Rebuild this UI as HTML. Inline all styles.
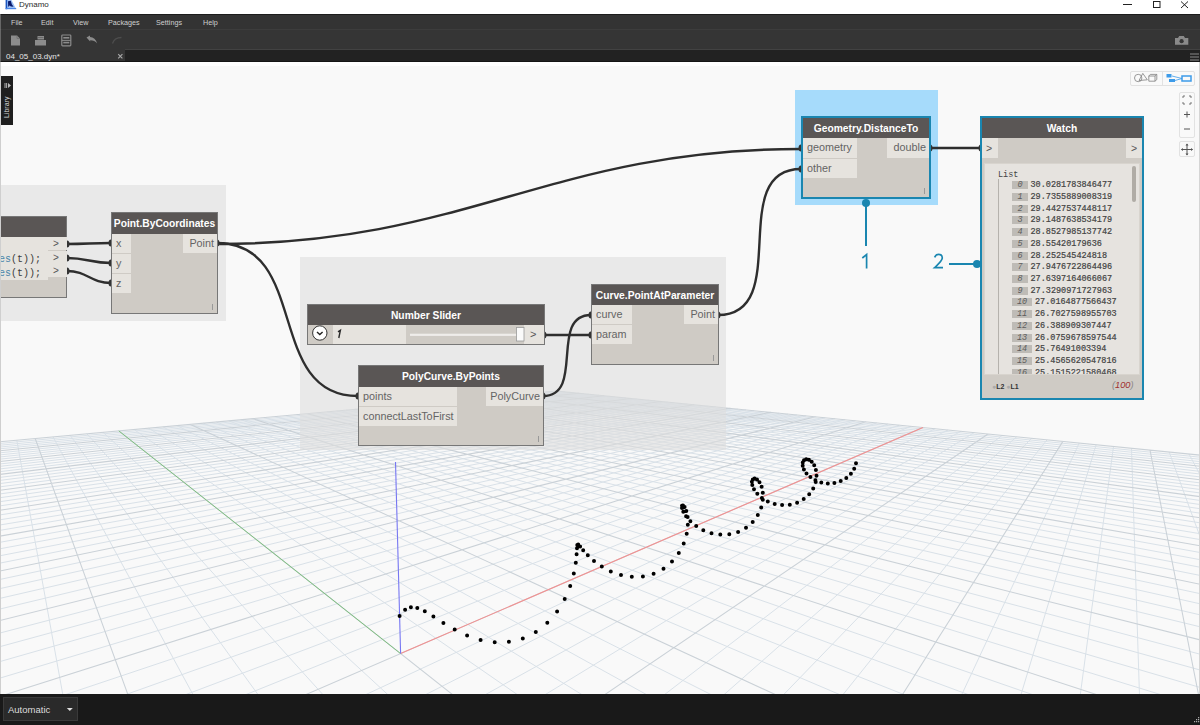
<!DOCTYPE html><html><head><meta charset="utf-8"><style>
*{margin:0;padding:0;box-sizing:border-box}
html,body{width:1200px;height:725px;overflow:hidden;background:#fff;font-family:"Liberation Sans",sans-serif}
.abs{position:absolute}
#title{position:absolute;left:0;top:0;width:1200px;height:14px;background:#fff}
#menu{position:absolute;left:0;top:14px;width:1200px;height:16px;background:#333;border-top:1px solid #1c1c1c;border-bottom:1px solid #3c3c3c}
#menu span{position:absolute;top:2.7px;font-size:7.2px;color:#cfcfcf}
#tool{position:absolute;left:0;top:30px;width:1200px;height:20px;background:#353535;border-bottom:1px solid #424242}
#tabs{position:absolute;left:0;top:50px;width:1200px;height:12px;background:#222;border-bottom:1px solid #151515}
#tab{position:absolute;left:0;top:-1px;width:125px;height:12px;background:#353535}
#canvas{position:absolute;left:0;top:62px;width:1200px;height:632px;background:#f9f9f9;overflow:hidden}
#bottom{position:absolute;left:0;top:694px;width:1200px;height:31px;background:#191919}
.group{position:absolute;background:rgba(222,222,222,0.6)}
.node{position:absolute;background:#cfcbc5}
.hdr{position:absolute;left:0;top:0;right:0;background:#5a5655;color:#fff;font-weight:bold;font-size:10.25px;text-align:center;white-space:nowrap}
.pin{position:absolute;left:0;background:#e6e3de;color:#646464;font-size:10.8px;padding-left:4px;white-space:nowrap}
.pout{position:absolute;right:0;background:#e6e3de;color:#646464;font-size:10.8px;padding-right:3px;text-align:right;white-space:nowrap}
.lace{position:absolute;right:4px;bottom:3px;width:1px;height:6px;background:#999}
svg{position:absolute;left:0;top:0}
</style></head><body>
<div id="title">
<svg width="20" height="14" style="left:0;top:0"><path d="M6 0H11.5L16 8.8H6Z" fill="#9cc0f5"/><path d="M8 1.2L10.8 0.8L11.8 4.2L13.6 6.8L11 6.6L9.2 5.6L8.2 7.2Z" fill="#0a1a6e"/><rect x="5.6" y="0" width="1.6" height="9.2" fill="#1b55c0"/><rect x="5.6" y="8" width="10.6" height="1.2" fill="#4a86e8"/></svg>
<div class="abs" style="left:19px;top:-0.5px;font-size:8px;color:#2b2b2b">Dynamo</div>
<svg width="80" height="14" style="left:1115px;top:0"><path d="M8 4.5H17" stroke="#222" stroke-width="1"/><rect x="38.5" y="1.5" width="6.5" height="6" fill="none" stroke="#222"/><path d="M66 1.5L73 8M73 1.5L66 8" stroke="#222" stroke-width="1"/></svg>
</div>
<div id="menu"><span style="left:11px">File</span><span style="left:41px">Edit</span><span style="left:73px">View</span><span style="left:108px">Packages</span><span style="left:156px">Settings</span><span style="left:203px">Help</span></div>
<div id="tool"><svg width="1200" height="19">
<path d="M11 5.5H17L20 8.5V15.5H11Z" fill="#8c8c8c"/><path d="M17 5.5V8.5H20" fill="none" stroke="#666" stroke-width="0.6"/>
<path d="M35 10H46V15.5H35Z" fill="#8c8c8c"/><path d="M37.5 6H44V9.5H37.5Z" fill="#8c8c8c"/><path d="M38 7.5H43.5" stroke="#555" stroke-width="0.6"/>
<rect x="61.8" y="5" width="9" height="10.8" rx="0.8" fill="none" stroke="#8c8c8c" stroke-width="1.2"/><rect x="63.3" y="7" width="6" height="1.6" fill="#8c8c8c"/><rect x="63.3" y="11.8" width="6" height="1.6" fill="#8c8c8c"/><path d="M61.8 10.4H70.8" stroke="#8c8c8c" stroke-width="1"/>
<path d="M86.5 7.5L90 5.5V7C93.5 7.3 96 9.5 97.2 13.5C95.5 11.5 93.2 10.3 90.2 10.3V11.5Z" fill="#8c8c8c"/>
<path d="M112.5 13.5C113.5 10 116.5 7.5 121.5 7.5" fill="none" stroke="#4d4d4d" stroke-width="1.4"/>
<path d="M1175 8H1178L1179.2 6H1183.8L1185 8H1188.3V14.8H1175Z" fill="#8a8a8a"/><circle cx="1181.6" cy="11.2" r="2.1" fill="#353535"/>
</svg></div>
<div id="tabs"><div id="tab"><div class="abs" style="left:6px;top:3px;font-size:8px;color:#e6e6e6">04_05_03.dyn*</div>
<svg width="12" height="12" style="left:115.5px;top:2px"><path d="M2.2 3.2L6.4 7.4M6.4 3.2L2.2 7.4" stroke="#aaa" stroke-width="1.1"/></svg></div>
<svg width="12" height="12" style="left:1189px;top:1px"><path d="M1 3H10M1 6H10M1 9H10" stroke="#888" stroke-width="1"/></svg></div>
<div id="canvas"><div style="position:absolute;left:0;top:0;width:1200px;height:4px;background:#fff"></div><div style="position:absolute;left:1198.8px;top:0;width:1.2px;height:632px;background:#d5d5d5;z-index:5"></div><div style="position:absolute;left:0;top:0;width:1.2px;height:632px;background:#cfcfcf;z-index:5"></div>
<svg width="1200" height="632" viewBox="0 62 1200 632">
<path d="M1205.0 484.1L1189.0 454.0M1205.0 550.3L1169.2 452.0M1139.6 699.0L1131.5 448.3M1079.7 699.0L1113.5 446.5M1019.7 699.0L1096.1 444.8M959.7 699.0L1079.2 443.1M839.5 699.0L1047.0 439.9M779.4 699.0L1031.6 438.3M-2.4 699.0L-2.2 441.9M719.1 699.0L1016.6 436.8M63.6 699.0L16.8 440.2M658.8 699.0L1002.1 435.4M195.4 699.0L53.0 436.9M538.0 699.0L974.2 432.6M261.2 699.0L70.2 435.3M477.5 699.0L960.9 431.3M326.9 699.0L86.9 433.8M417.0 699.0L947.9 430.0M392.6 699.0L103.1 432.3M356.4 699.0L935.2 428.7M523.7 699.0L134.0 429.5M235.0 699.0L910.9 426.3M589.1 699.0L148.7 428.2M174.2 699.0L899.2 425.1M654.5 699.0L163.1 426.9M113.3 699.0L887.8 424.0M719.8 699.0L177.0 425.6M52.4 699.0L876.7 422.9M850.1 699.0L203.6 423.2M-5.0 679.6L855.3 420.8M915.2 699.0L216.4 422.0M-5.0 663.0L845.0 419.7M980.2 699.0L228.8 420.9M-5.0 648.0L834.9 418.7M1045.2 699.0L240.9 419.7M-5.0 634.3L825.1 417.8M1174.9 699.0L264.1 417.6M-5.0 610.2L806.1 415.9M1205.0 688.9L275.3 416.6M-5.0 599.5L796.9 415.0M1205.0 671.4L286.2 415.6M-5.0 589.7L788.0 414.1M1205.0 655.5L296.8 414.6M-5.0 580.5L779.2 413.2M1205.0 628.0L317.2 412.8M-5.0 564.1L762.2 411.5M1205.0 616.0L327.0 411.9M-5.0 556.7L754.0 410.7M1205.0 604.9L336.6 411.0M-5.0 549.7L746.0 409.9M1205.0 594.7L346.0 410.1M-5.0 543.2L738.1 409.1M1205.0 576.4L364.1 408.5M-5.0 531.2L722.9 407.6M1205.0 568.2L372.9 407.7M-5.0 525.8L715.5 406.8M1205.0 560.6L381.4 406.9M-5.0 520.6L708.2 406.1M1205.0 553.4L389.8 406.2M-5.0 515.7L701.1 405.4M1205.0 540.4L405.9 404.7M-5.0 506.6L687.3 404.0M1205.0 534.5L413.7 404.0M-5.0 502.4L680.7 403.4M1205.0 528.9L421.4 403.3M-5.0 498.4L674.1 402.7M1205.0 523.6L428.9 402.6M-5.0 494.6L667.7 402.1M1205.0 513.9L443.4 401.3M-5.0 487.5L655.2 400.8M1205.0 509.4L450.4 400.6M-5.0 484.2L649.1 400.2M1205.0 505.2L457.3 400.0M-5.0 481.0L643.1 399.6M1205.0 501.1L464.1 399.4M-5.0 478.0L637.2 399.0M1205.0 493.6L477.1 398.2M-5.0 472.2L625.8 397.9M1205.0 490.1L483.5 397.6M-5.0 469.5L620.3 397.4M1205.0 486.7L489.7 397.0M-5.0 466.9L614.8 396.8M1205.0 483.5L495.9 396.5M-5.0 464.5L609.5 396.3M1205.0 477.5L507.7 395.4M-5.0 459.7L599.0 395.2M1205.0 474.6L513.5 394.9M-5.0 457.5L593.9 394.7M1205.0 471.9L519.2 394.3M-5.0 455.4L588.9 394.2M1205.0 469.3L524.7 393.8M-5.0 453.3L584.0 393.7M1205.0 464.4L535.6 392.8M-5.0 449.3L574.4 392.8M1205.0 462.1L540.9 392.4M-5.0 447.5L569.7 392.3M1205.0 459.8L546.0 391.9M-5.0 445.7L565.1 391.9M1205.0 457.7L551.1 391.4M-5.0 443.9L560.6 391.4" stroke="#d9e1e8" stroke-width="1" fill="none"/>
<path d="M1199.4 699.0L1150.0 450.1M899.7 699.0L1062.9 441.4M129.5 699.0L35.2 438.5M598.4 699.0L988.0 434.0M458.1 699.0L118.8 430.9M295.7 699.0L922.9 427.5M785.0 699.0L190.5 424.4M-5.0 697.9L865.9 421.8M1110.1 699.0L252.7 418.7M-5.0 621.7L815.5 416.8M1205.0 641.1L307.1 413.7M-5.0 572.0L770.6 412.3M1205.0 585.2L355.2 409.3M-5.0 537.0L730.4 408.3M1205.0 546.7L397.9 405.4M-5.0 511.0L694.2 404.7M1205.0 518.6L436.2 401.9M-5.0 491.0L661.4 401.5M1205.0 497.3L470.7 398.8M-5.0 475.0L631.5 398.5M1205.0 480.4L501.9 395.9M-5.0 462.1L604.2 395.8M1205.0 466.8L530.2 393.3M-5.0 451.3L579.2 393.3M1205.0 455.6L556.1 391.0M-5.0 442.2L556.1 391.0" stroke="#cad1d7" stroke-width="1.05" fill="none"/>
<path d="M400.6 653.6L922.9 427.5" stroke="#f29090" stroke-width="1.1"/>
<path d="M400.6 653.6L118.8 430.9" stroke="#80c080" stroke-width="1"/>
<path d="M400.6 653.6L395.5 462.0" stroke="#7777f2" stroke-width="1.1"/>
<path d="M399.6 616.1m-2 0a2 2 0 1 0 4 0a2 2 0 1 0 -4 0M405.1 609.8m-2 0a2 2 0 1 0 4 0a2 2 0 1 0 -4 0M410.9 607.2m-2 0a2 2 0 1 0 4 0a2 2 0 1 0 -4 0M417.3 607.9m-2 0a2 2 0 1 0 4 0a2 2 0 1 0 -4 0M424.8 611.3m-2 0a2 2 0 1 0 4 0a2 2 0 1 0 -4 0M433.4 616.6m-2 0a2 2 0 1 0 4 0a2 2 0 1 0 -4 0M443.4 623.0m-2 0a2 2 0 1 0 4 0a2 2 0 1 0 -4 0M454.7 629.5m-2 0a2 2 0 1 0 4 0a2 2 0 1 0 -4 0M467.1 635.4m-2 0a2 2 0 1 0 4 0a2 2 0 1 0 -4 0M480.6 639.9m-2 0a2 2 0 1 0 4 0a2 2 0 1 0 -4 0M494.7 642.2m-2 0a2 2 0 1 0 4 0a2 2 0 1 0 -4 0M508.9 641.8m-2 0a2 2 0 1 0 4 0a2 2 0 1 0 -4 0M522.8 638.4m-2 0a2 2 0 1 0 4 0a2 2 0 1 0 -4 0M535.8 632.0m-2 0a2 2 0 1 0 4 0a2 2 0 1 0 -4 0M547.3 622.8m-2 0a2 2 0 1 0 4 0a2 2 0 1 0 -4 0M557.1 611.5m-2 0a2 2 0 1 0 4 0a2 2 0 1 0 -4 0M564.7 598.9m-2 0a2 2 0 1 0 4 0a2 2 0 1 0 -4 0M570.2 585.9m-2 0a2 2 0 1 0 4 0a2 2 0 1 0 -4 0M573.8 573.6m-2 0a2 2 0 1 0 4 0a2 2 0 1 0 -4 0M575.8 562.8m-2 0a2 2 0 1 0 4 0a2 2 0 1 0 -4 0M576.6 554.2m-2 0a2 2 0 1 0 4 0a2 2 0 1 0 -4 0M577.0 548.3m-2 0a2 2 0 1 0 4 0a2 2 0 1 0 -4 0M577.3 545.1m-2 0a2 2 0 1 0 4 0a2 2 0 1 0 -4 0M578.2 544.6m-2 0a2 2 0 1 0 4 0a2 2 0 1 0 -4 0M580.1 546.5m-2 0a2 2 0 1 0 4 0a2 2 0 1 0 -4 0M583.2 550.2m-2 0a2 2 0 1 0 4 0a2 2 0 1 0 -4 0M587.8 555.3m-2 0a2 2 0 1 0 4 0a2 2 0 1 0 -4 0M594.0 560.9m-2 0a2 2 0 1 0 4 0a2 2 0 1 0 -4 0M601.8 566.5m-2 0a2 2 0 1 0 4 0a2 2 0 1 0 -4 0M610.8 571.4m-2 0a2 2 0 1 0 4 0a2 2 0 1 0 -4 0M621.0 575.0m-2 0a2 2 0 1 0 4 0a2 2 0 1 0 -4 0M631.8 576.8m-2 0a2 2 0 1 0 4 0a2 2 0 1 0 -4 0M642.9 576.4m-2 0a2 2 0 1 0 4 0a2 2 0 1 0 -4 0M653.6 573.7m-2 0a2 2 0 1 0 4 0a2 2 0 1 0 -4 0M663.5 568.7m-2 0a2 2 0 1 0 4 0a2 2 0 1 0 -4 0M672.0 561.6m-2 0a2 2 0 1 0 4 0a2 2 0 1 0 -4 0M678.8 553.0m-2 0a2 2 0 1 0 4 0a2 2 0 1 0 -4 0M683.7 543.5m-2 0a2 2 0 1 0 4 0a2 2 0 1 0 -4 0M686.7 533.8m-2 0a2 2 0 1 0 4 0a2 2 0 1 0 -4 0M687.8 524.8m-2 0a2 2 0 1 0 4 0a2 2 0 1 0 -4 0M687.6 517.0m-2 0a2 2 0 1 0 4 0a2 2 0 1 0 -4 0M686.3 511.0m-2 0a2 2 0 1 0 4 0a2 2 0 1 0 -4 0M684.6 507.1m-2 0a2 2 0 1 0 4 0a2 2 0 1 0 -4 0M683.0 505.4m-2 0a2 2 0 1 0 4 0a2 2 0 1 0 -4 0M682.0 505.8m-2 0a2 2 0 1 0 4 0a2 2 0 1 0 -4 0M682.0 508.0m-2 0a2 2 0 1 0 4 0a2 2 0 1 0 -4 0M683.3 511.7m-2 0a2 2 0 1 0 4 0a2 2 0 1 0 -4 0M686.1 516.2m-2 0a2 2 0 1 0 4 0a2 2 0 1 0 -4 0M690.4 521.2m-2 0a2 2 0 1 0 4 0a2 2 0 1 0 -4 0M696.2 526.1m-2 0a2 2 0 1 0 4 0a2 2 0 1 0 -4 0M703.3 530.2m-2 0a2 2 0 1 0 4 0a2 2 0 1 0 -4 0M711.5 533.2m-2 0a2 2 0 1 0 4 0a2 2 0 1 0 -4 0M720.3 534.6m-2 0a2 2 0 1 0 4 0a2 2 0 1 0 -4 0M729.3 534.2m-2 0a2 2 0 1 0 4 0a2 2 0 1 0 -4 0M738.1 531.9m-2 0a2 2 0 1 0 4 0a2 2 0 1 0 -4 0M746.0 527.8m-2 0a2 2 0 1 0 4 0a2 2 0 1 0 -4 0M752.7 522.0m-2 0a2 2 0 1 0 4 0a2 2 0 1 0 -4 0M757.8 515.0m-2 0a2 2 0 1 0 4 0a2 2 0 1 0 -4 0M761.2 507.4m-2 0a2 2 0 1 0 4 0a2 2 0 1 0 -4 0M762.8 499.8m-2 0a2 2 0 1 0 4 0a2 2 0 1 0 -4 0M762.8 492.7m-2 0a2 2 0 1 0 4 0a2 2 0 1 0 -4 0M761.6 486.7m-2 0a2 2 0 1 0 4 0a2 2 0 1 0 -4 0M759.5 482.3m-2 0a2 2 0 1 0 4 0a2 2 0 1 0 -4 0M757.0 479.5m-2 0a2 2 0 1 0 4 0a2 2 0 1 0 -4 0M754.6 478.6m-2 0a2 2 0 1 0 4 0a2 2 0 1 0 -4 0M752.8 479.4m-2 0a2 2 0 1 0 4 0a2 2 0 1 0 -4 0M751.9 481.7m-2 0a2 2 0 1 0 4 0a2 2 0 1 0 -4 0M752.3 485.1m-2 0a2 2 0 1 0 4 0a2 2 0 1 0 -4 0M754.0 489.2m-2 0a2 2 0 1 0 4 0a2 2 0 1 0 -4 0M757.3 493.7m-2 0a2 2 0 1 0 4 0a2 2 0 1 0 -4 0M761.9 497.9m-2 0a2 2 0 1 0 4 0a2 2 0 1 0 -4 0M767.8 501.5m-2 0a2 2 0 1 0 4 0a2 2 0 1 0 -4 0M774.7 504.0m-2 0a2 2 0 1 0 4 0a2 2 0 1 0 -4 0M782.1 505.1m-2 0a2 2 0 1 0 4 0a2 2 0 1 0 -4 0M789.8 504.7m-2 0a2 2 0 1 0 4 0a2 2 0 1 0 -4 0M797.1 502.7m-2 0a2 2 0 1 0 4 0a2 2 0 1 0 -4 0M803.7 499.1m-2 0a2 2 0 1 0 4 0a2 2 0 1 0 -4 0M809.2 494.2m-2 0a2 2 0 1 0 4 0a2 2 0 1 0 -4 0M813.2 488.4m-2 0a2 2 0 1 0 4 0a2 2 0 1 0 -4 0M815.7 482.1m-2 0a2 2 0 1 0 4 0a2 2 0 1 0 -4 0M816.5 475.8m-2 0a2 2 0 1 0 4 0a2 2 0 1 0 -4 0M815.9 470.0m-2 0a2 2 0 1 0 4 0a2 2 0 1 0 -4 0M814.2 465.2m-2 0a2 2 0 1 0 4 0a2 2 0 1 0 -4 0M811.7 461.7m-2 0a2 2 0 1 0 4 0a2 2 0 1 0 -4 0M808.9 459.7m-2 0a2 2 0 1 0 4 0a2 2 0 1 0 -4 0M806.2 459.2m-2 0a2 2 0 1 0 4 0a2 2 0 1 0 -4 0M804.0 460.2m-2 0a2 2 0 1 0 4 0a2 2 0 1 0 -4 0M802.8 462.5m-2 0a2 2 0 1 0 4 0a2 2 0 1 0 -4 0M802.7 465.7m-2 0a2 2 0 1 0 4 0a2 2 0 1 0 -4 0M803.9 469.4m-2 0a2 2 0 1 0 4 0a2 2 0 1 0 -4 0M806.5 473.4m-2 0a2 2 0 1 0 4 0a2 2 0 1 0 -4 0M810.4 477.1m-2 0a2 2 0 1 0 4 0a2 2 0 1 0 -4 0M815.4 480.3m-2 0a2 2 0 1 0 4 0a2 2 0 1 0 -4 0M821.3 482.4m-2 0a2 2 0 1 0 4 0a2 2 0 1 0 -4 0M827.8 483.4m-2 0a2 2 0 1 0 4 0a2 2 0 1 0 -4 0M834.4 483.0m-2 0a2 2 0 1 0 4 0a2 2 0 1 0 -4 0M840.7 481.1m-2 0a2 2 0 1 0 4 0a2 2 0 1 0 -4 0M846.3 478.0m-2 0a2 2 0 1 0 4 0a2 2 0 1 0 -4 0M850.9 473.7m-2 0a2 2 0 1 0 4 0a2 2 0 1 0 -4 0M854.2 468.7m-2 0a2 2 0 1 0 4 0a2 2 0 1 0 -4 0M856.0 463.3m-2 0a2 2 0 1 0 4 0a2 2 0 1 0 -4 0" fill="#000"/>
</svg>
<div class="group" style="left:0;top:123px;width:226px;height:136px"></div>
<div class="group" style="left:300px;top:195px;width:426px;height:193px"></div>
</div>
<div class="abs" style="left:1px;top:76px;width:12px;height:49px;background:#1f1f1f"></div>
<div class="abs" style="left:2px;top:118px;width:11px;height:0;transform-origin:0 0;transform:rotate(-90deg)"><div style="position:absolute;left:0;top:0.8px;font-size:7px;color:#d8d8d8;white-space:nowrap">Library</div></div>
<svg width="12" height="12" style="left:1px;top:80px"><path d="M4 3V8M5.6 3V8" stroke="#bbb" stroke-width="0.9" fill="none"/><path d="M7 3L10 5.5L7 8Z" fill="#bbb"/></svg>
<div class="abs" style="left:1130px;top:71px;width:65px;height:15px;background:#f9f9f9;border:1px solid #e2e2e2;border-radius:2px"></div>
<div class="abs" style="left:1162px;top:72px;width:1px;height:13px;background:#e2e2e2"></div>
<svg width="70" height="20" style="left:1128px;top:68px">
<circle cx="10.2" cy="10" r="3.7" fill="none" stroke="#808080" stroke-width="0.8"/><path d="M11 12.5L14.8 5.4L19.3 11.8Z" fill="none" stroke="#808080" stroke-width="0.8"/>
<path d="M20.8 8H27V13.2H20.8ZM20.8 8L22.3 6.4H28.8V11.6L27 13.2M27 8L28.8 6.4" fill="none" stroke="#808080" stroke-width="0.8"/>
<rect x="38.5" y="6" width="5" height="3.5" fill="#3d9be9"/><rect x="41" y="11" width="6" height="3" fill="#3d9be9"/><rect x="54" y="8" width="9" height="5" fill="none" stroke="#3d9be9" stroke-width="1.5"/>
<path d="M44 8L54 10.5M47 12.5L54 10.5" stroke="#3d9be9" stroke-width="0.8"/>
</svg>
<div class="abs" style="left:1179px;top:92px;width:16px;height:46px;background:#f9f9f9;border:1px solid #e2e2e2;border-radius:2px"></div>
<div class="abs" style="left:1179px;top:141px;width:16px;height:16px;background:#f9f9f9;border:1px solid #e2e2e2;border-radius:2px"></div>
<svg width="20" height="70" style="left:1177px;top:90px">
<path d="M6 8V6H8M12 6H14V8M14 12V14H12M8 14H6V12" fill="none" stroke="#666" stroke-width="0.9"/>
<path d="M10 21.5V27.5M7 24.5H13" stroke="#555" stroke-width="1"/>
<path d="M7 39H13" stroke="#555" stroke-width="1"/>
<path d="M10 54V65M4.5 59.5H15.5" stroke="#555" stroke-width="1"/><path d="M8.5 55.5L10 53.5L11.5 55.5ZM8.5 63.5L10 65.5L11.5 63.5ZM6 58L4 59.5L6 61ZM14 58L16 59.5L14 61Z" fill="#555"/>
</svg>
<div class="abs" style="left:795px;top:90px;width:143px;height:115px;background:#a6dbfb"></div>
<svg width="1200" height="725"><path d="M67 244C86.8 244 91.2 243 111 243M67 258C86.9 258 91.1 263 111 263M67 271C87.5 271 90.5 283 111 283M217 244C468 244 550 149 801 149M217 243C310.6 243 264.4 396 358 396M544 335C565.1 335 569.9 335 591 335M543 396C585.4 396 548.6 315 591 315M718 315C793.6 315 725.4 169 801 169M930 148C953.0 148 958.0 148 981 148" stroke="#2e2e2e" stroke-width="2.4" fill="none"/></svg>
<svg width="1200" height="725"><ellipse cx="67" cy="244" rx="2.5" ry="3.5" fill="#333"/><ellipse cx="67" cy="258" rx="2.5" ry="3.5" fill="#333"/><ellipse cx="67" cy="271" rx="2.5" ry="3.5" fill="#333"/><ellipse cx="111" cy="243" rx="2.5" ry="3.5" fill="#333"/><ellipse cx="111" cy="263" rx="2.5" ry="3.5" fill="#333"/><ellipse cx="111" cy="283" rx="2.5" ry="3.5" fill="#333"/><ellipse cx="217" cy="243" rx="2.5" ry="3.5" fill="#333"/><ellipse cx="801" cy="148" rx="2.5" ry="3.5" fill="#333"/><ellipse cx="801" cy="169" rx="2.5" ry="3.5" fill="#333"/><ellipse cx="930" cy="148" rx="2.5" ry="3.5" fill="#333"/><ellipse cx="981" cy="148" rx="2.5" ry="3.5" fill="#333"/><ellipse cx="544" cy="335" rx="2.5" ry="3.5" fill="#333"/><ellipse cx="591" cy="315" rx="2.5" ry="3.5" fill="#333"/><ellipse cx="591" cy="335" rx="2.5" ry="3.5" fill="#333"/><ellipse cx="718" cy="315" rx="2.5" ry="3.5" fill="#333"/><ellipse cx="543" cy="396" rx="2.5" ry="3.5" fill="#333"/><ellipse cx="358" cy="396" rx="2.5" ry="3.5" fill="#333"/></svg>
<div class="node" style="left:-10px;top:216px;width:77px;height:81.5px;border:1px solid #777">
<div class="hdr" style="height:20px"></div>
<div class="abs" style="left:0;top:20px;width:57px;height:43px;background:#e6e3de"></div>
<div class="abs" style="left:8px;top:36.3px;font-family:'Liberation Mono';font-size:10px;line-height:13.7px;color:#3c3c3c"><span style="color:#4a86aa">es</span>(t));<br><span style="color:#4a86aa">es</span>(t));</div>
<div class="abs" style="left:57px;top:20.0px;width:19px;height:13px;background:#e6e3de;color:#555;font-size:10px;line-height:13px;padding-left:5px">&gt;</div><div class="abs" style="left:57px;top:33.5px;width:19px;height:13px;background:#e6e3de;color:#555;font-size:10px;line-height:13px;padding-left:5px">&gt;</div><div class="abs" style="left:57px;top:47.0px;width:19px;height:13px;background:#e6e3de;color:#555;font-size:10px;line-height:13px;padding-left:5px">&gt;</div></div>
<div class="node" style="left:111px;top:212px;width:107px;height:102px;border:1px solid #777"><div class="hdr" style="height:20.5px;line-height:22.5px">Point.ByCoordinates</div><div class="pin" style="top:20.5px;width:19px;height:19px;line-height:19px">x</div><div class="pin" style="top:40.5px;width:19px;height:19px;line-height:19px">y</div><div class="pin" style="top:60.5px;width:19px;height:19px;line-height:19px">z</div><div class="pout" style="top:20.5px;width:34px;height:19px;line-height:19px">Point</div><div class="lace"></div></div>
<div class="node" style="left:307px;top:304px;width:238px;height:41px;border:1px solid #777"><div class="hdr" style="height:19.5px;line-height:21.5px">Number Slider</div></div>
<div class="abs" style="left:308px;top:324.5px;width:236px;height:19.5px">
<div class="abs" style="left:25px;top:0;width:73px;height:19.5px;background:#e6e3de"></div>

<div class="abs" style="left:216px;top:0;width:20px;height:19px;background:#e6e3de"></div>
<div class="abs" style="left:222px;top:3px;font-size:11px;color:#555">&gt;</div>
<svg width="236" height="19"><circle cx="11.8" cy="8" r="7.2" fill="#fff" stroke="#333" stroke-width="1"/><path d="M9 7L11.8 9.6L14.6 7" stroke="#222" stroke-width="1.4" fill="none"/>
<path d="M30 6.8L32.4 5.2L30.8 13" fill="none" stroke="#2a2a2a" stroke-width="1.4"/><rect x="102" y="8.7" width="110" height="2.2" fill="#efedea"/>
<rect x="208.5" y="2.5" width="7.5" height="13.5" fill="#fafafa" stroke="#9a9a9a" stroke-width="0.8"/></svg>
</div>
<div class="node" style="left:591px;top:284px;width:128px;height:81px;border:1px solid #777"><div class="hdr" style="height:19.8px;line-height:21.8px">Curve.PointAtParameter</div><div class="pin" style="top:19.8px;width:40px;height:19.3px;line-height:19.3px">curve</div><div class="pin" style="top:40.1px;width:40px;height:19.3px;line-height:19.3px">param</div><div class="pout" style="top:19.8px;width:34px;height:19.3px;line-height:19.3px">Point</div><div class="lace"></div></div>
<div class="node" style="left:358px;top:365px;width:186px;height:81px;border:1px solid #777"><div class="hdr" style="height:20.5px;line-height:22.5px">PolyCurve.ByPoints</div><div class="pin" style="top:20.5px;width:98px;height:19px;line-height:19px">points</div><div class="pin" style="top:40.5px;width:98px;height:19px;line-height:19px">connectLastToFirst</div><div class="pout" style="top:20.5px;width:57px;height:19px;line-height:19px">PolyCurve</div><div class="lace"></div></div>
<div class="node" style="left:801px;top:116px;width:130px;height:83px;border:2px solid #1a86b0"><div class="hdr" style="height:20px;line-height:22px">Geometry.DistanceTo</div><div class="pin" style="top:20.0px;width:54px;height:19.5px;line-height:19.5px">geometry</div><div class="pin" style="top:40.5px;width:54px;height:19.5px;line-height:19.5px">other</div><div class="pout" style="top:20.0px;width:42px;height:19.5px;line-height:19.5px">double</div><div class="lace"></div></div>
<div class="node" style="left:980px;top:116px;width:164px;height:284px;border:2px solid #1a86b0">
<div class="hdr" style="height:20px;line-height:21px">Watch</div>
<div class="abs" style="left:0;top:20px;width:16px;height:20px;background:#e6e3de;color:#555;font-size:10.5px;line-height:21px;padding-left:4px">&gt;</div>
<div class="abs" style="right:0;top:20px;width:16px;height:20px;background:#e6e3de;color:#555;font-size:10.5px;line-height:21px;padding-left:5px">&gt;</div>
<div class="abs" style="left:2px;top:45px;width:156px;height:212px;background:#e6e3df;overflow:hidden;border:1px solid #d8d4ce">
<div class="abs" style="left:12.8px;top:15px;width:1px;height:210px;background:#b5b2ad"></div>
<div class="abs" style="left:13px;top:5px;font-family:'Liberation Mono';font-size:8.5px;line-height:12px;color:#444">List</div>
<div class="abs" style="left:-2px;top:-45px;width:156px"><div class="abs" style="left:29px;top:62.2px;width:16px;height:8px;background:#bebbb6"></div><div class="abs" style="left:29px;top:60.2px;width:16px;text-align:center;font-family:'Liberation Mono';font-style:italic;font-size:8.5px;line-height:12px;color:#5c5c5c">0</div><div class="abs" style="left:47.5px;top:60.2px;font-family:'Liberation Mono';font-size:8.5px;line-height:12px;color:#444;-webkit-text-stroke:0.2px #444">30.0281783846477</div><div class="abs" style="left:29px;top:73.9px;width:16px;height:8px;background:#bebbb6"></div><div class="abs" style="left:29px;top:71.9px;width:16px;text-align:center;font-family:'Liberation Mono';font-style:italic;font-size:8.5px;line-height:12px;color:#5c5c5c">1</div><div class="abs" style="left:47.5px;top:71.9px;font-family:'Liberation Mono';font-size:8.5px;line-height:12px;color:#444;-webkit-text-stroke:0.2px #444">29.7355889008319</div><div class="abs" style="left:29px;top:85.6px;width:16px;height:8px;background:#bebbb6"></div><div class="abs" style="left:29px;top:83.6px;width:16px;text-align:center;font-family:'Liberation Mono';font-style:italic;font-size:8.5px;line-height:12px;color:#5c5c5c">2</div><div class="abs" style="left:47.5px;top:83.6px;font-family:'Liberation Mono';font-size:8.5px;line-height:12px;color:#444;-webkit-text-stroke:0.2px #444">29.4427537448117</div><div class="abs" style="left:29px;top:97.3px;width:16px;height:8px;background:#bebbb6"></div><div class="abs" style="left:29px;top:95.3px;width:16px;text-align:center;font-family:'Liberation Mono';font-style:italic;font-size:8.5px;line-height:12px;color:#5c5c5c">3</div><div class="abs" style="left:47.5px;top:95.3px;font-family:'Liberation Mono';font-size:8.5px;line-height:12px;color:#444;-webkit-text-stroke:0.2px #444">29.1487638534179</div><div class="abs" style="left:29px;top:109.1px;width:16px;height:8px;background:#bebbb6"></div><div class="abs" style="left:29px;top:107.1px;width:16px;text-align:center;font-family:'Liberation Mono';font-style:italic;font-size:8.5px;line-height:12px;color:#5c5c5c">4</div><div class="abs" style="left:47.5px;top:107.1px;font-family:'Liberation Mono';font-size:8.5px;line-height:12px;color:#444;-webkit-text-stroke:0.2px #444">28.8527985137742</div><div class="abs" style="left:29px;top:120.8px;width:16px;height:8px;background:#bebbb6"></div><div class="abs" style="left:29px;top:118.8px;width:16px;text-align:center;font-family:'Liberation Mono';font-style:italic;font-size:8.5px;line-height:12px;color:#5c5c5c">5</div><div class="abs" style="left:47.5px;top:118.8px;font-family:'Liberation Mono';font-size:8.5px;line-height:12px;color:#444;-webkit-text-stroke:0.2px #444">28.55420179636</div><div class="abs" style="left:29px;top:132.5px;width:16px;height:8px;background:#bebbb6"></div><div class="abs" style="left:29px;top:130.5px;width:16px;text-align:center;font-family:'Liberation Mono';font-style:italic;font-size:8.5px;line-height:12px;color:#5c5c5c">6</div><div class="abs" style="left:47.5px;top:130.5px;font-family:'Liberation Mono';font-size:8.5px;line-height:12px;color:#444;-webkit-text-stroke:0.2px #444">28.252545424818</div><div class="abs" style="left:29px;top:144.2px;width:16px;height:8px;background:#bebbb6"></div><div class="abs" style="left:29px;top:142.2px;width:16px;text-align:center;font-family:'Liberation Mono';font-style:italic;font-size:8.5px;line-height:12px;color:#5c5c5c">7</div><div class="abs" style="left:47.5px;top:142.2px;font-family:'Liberation Mono';font-size:8.5px;line-height:12px;color:#444;-webkit-text-stroke:0.2px #444">27.9476722864496</div><div class="abs" style="left:29px;top:155.9px;width:16px;height:8px;background:#bebbb6"></div><div class="abs" style="left:29px;top:153.9px;width:16px;text-align:center;font-family:'Liberation Mono';font-style:italic;font-size:8.5px;line-height:12px;color:#5c5c5c">8</div><div class="abs" style="left:47.5px;top:153.9px;font-family:'Liberation Mono';font-size:8.5px;line-height:12px;color:#444;-webkit-text-stroke:0.2px #444">27.6397164066067</div><div class="abs" style="left:29px;top:167.6px;width:16px;height:8px;background:#bebbb6"></div><div class="abs" style="left:29px;top:165.6px;width:16px;text-align:center;font-family:'Liberation Mono';font-style:italic;font-size:8.5px;line-height:12px;color:#5c5c5c">9</div><div class="abs" style="left:47.5px;top:165.6px;font-family:'Liberation Mono';font-size:8.5px;line-height:12px;color:#444;-webkit-text-stroke:0.2px #444">27.3290971727963</div><div class="abs" style="left:29px;top:179.4px;width:20px;height:8px;background:#bebbb6"></div><div class="abs" style="left:29px;top:177.4px;width:20px;text-align:center;font-family:'Liberation Mono';font-style:italic;font-size:8.5px;line-height:12px;color:#5c5c5c">10</div><div class="abs" style="left:52px;top:177.4px;font-family:'Liberation Mono';font-size:8.5px;line-height:12px;color:#444;-webkit-text-stroke:0.2px #444">27.0164877566437</div><div class="abs" style="left:29px;top:191.1px;width:20px;height:8px;background:#bebbb6"></div><div class="abs" style="left:29px;top:189.1px;width:20px;text-align:center;font-family:'Liberation Mono';font-style:italic;font-size:8.5px;line-height:12px;color:#5c5c5c">11</div><div class="abs" style="left:52px;top:189.1px;font-family:'Liberation Mono';font-size:8.5px;line-height:12px;color:#444;-webkit-text-stroke:0.2px #444">26.7027598955703</div><div class="abs" style="left:29px;top:202.8px;width:20px;height:8px;background:#bebbb6"></div><div class="abs" style="left:29px;top:200.8px;width:20px;text-align:center;font-family:'Liberation Mono';font-style:italic;font-size:8.5px;line-height:12px;color:#5c5c5c">12</div><div class="abs" style="left:52px;top:200.8px;font-family:'Liberation Mono';font-size:8.5px;line-height:12px;color:#444;-webkit-text-stroke:0.2px #444">26.388909307447</div><div class="abs" style="left:29px;top:214.5px;width:20px;height:8px;background:#bebbb6"></div><div class="abs" style="left:29px;top:212.5px;width:20px;text-align:center;font-family:'Liberation Mono';font-style:italic;font-size:8.5px;line-height:12px;color:#5c5c5c">13</div><div class="abs" style="left:52px;top:212.5px;font-family:'Liberation Mono';font-size:8.5px;line-height:12px;color:#444;-webkit-text-stroke:0.2px #444">26.0759678597544</div><div class="abs" style="left:29px;top:226.2px;width:20px;height:8px;background:#bebbb6"></div><div class="abs" style="left:29px;top:224.2px;width:20px;text-align:center;font-family:'Liberation Mono';font-style:italic;font-size:8.5px;line-height:12px;color:#5c5c5c">14</div><div class="abs" style="left:52px;top:224.2px;font-family:'Liberation Mono';font-size:8.5px;line-height:12px;color:#444;-webkit-text-stroke:0.2px #444">25.76491003394</div><div class="abs" style="left:29px;top:237.9px;width:20px;height:8px;background:#bebbb6"></div><div class="abs" style="left:29px;top:235.9px;width:20px;text-align:center;font-family:'Liberation Mono';font-style:italic;font-size:8.5px;line-height:12px;color:#5c5c5c">15</div><div class="abs" style="left:52px;top:235.9px;font-family:'Liberation Mono';font-size:8.5px;line-height:12px;color:#444;-webkit-text-stroke:0.2px #444">25.4565620547816</div><div class="abs" style="left:29px;top:249.6px;width:20px;height:8px;background:#bebbb6"></div><div class="abs" style="left:29px;top:247.6px;width:20px;text-align:center;font-family:'Liberation Mono';font-style:italic;font-size:8.5px;line-height:12px;color:#5c5c5c">16</div><div class="abs" style="left:52px;top:247.6px;font-family:'Liberation Mono';font-size:8.5px;line-height:12px;color:#444;-webkit-text-stroke:0.2px #444">25.1515221580468</div></div>
<div class="abs" style="left:147px;top:2px;width:4px;height:36px;background:#b0aca6;border-radius:2px"></div>
</div>
<div class="abs" style="left:10px;top:265px;font-size:7px;font-weight:bold;color:#333"><span style="color:#aaa">&#9679;</span>L2 <span style="color:#aaa">&#9679;</span>L1</div>
<div class="abs" style="left:130px;top:262px;font-size:9.2px;font-style:italic;color:#888">(<span style="color:#a03030">100</span>)</div>
</div>
<svg width="1200" height="725">
<path d="M866 203V246M949 264H977" stroke="#1a86b0" stroke-width="2"/>
<circle cx="866" cy="203" r="4" fill="#1a86b0"/><circle cx="977" cy="264" r="4" fill="#1a86b0"/>
</svg>
<svg width="1200" height="725"><path d="M862.3 258L866.6 254.6V268.4" fill="none" stroke="#1a86b0" stroke-width="1.7"/>
<path d="M934.6 257.3C935.6 255 937 254.4 938.6 254.4C941 254.4 942.3 256 942.3 258C942.3 260.5 940 262.5 934.6 267.7H943" fill="none" stroke="#1a86b0" stroke-width="1.7"/></svg>
<div id="bottom"><div class="abs" style="left:3px;top:3px;width:75px;height:24px;background:#2a2a2a;border:1px solid #3a3a3a"></div>
<div class="abs" style="left:8px;top:10px;font-size:9.5px;color:#ddd">Automatic</div>
<svg width="10" height="6" style="left:66px;top:13px"><path d="M0.8 1H6.8L3.8 4Z" fill="#ddd"/></svg>
<svg width="10" height="10" style="left:1190px;top:21px"><path d="M8 2h1.2v1.2H8zM6 4h1.2v1.2H6zM8 4h1.2v1.2H8zM4 6h1.2v1.2H4zM6 6h1.2v1.2H6zM8 6h1.2v1.2H8z" fill="#aaa"/></svg></div>
<div class="abs" style="left:0;top:14px;width:1px;height:48px;background:rgba(200,200,200,0.35)"></div>
</body></html>
